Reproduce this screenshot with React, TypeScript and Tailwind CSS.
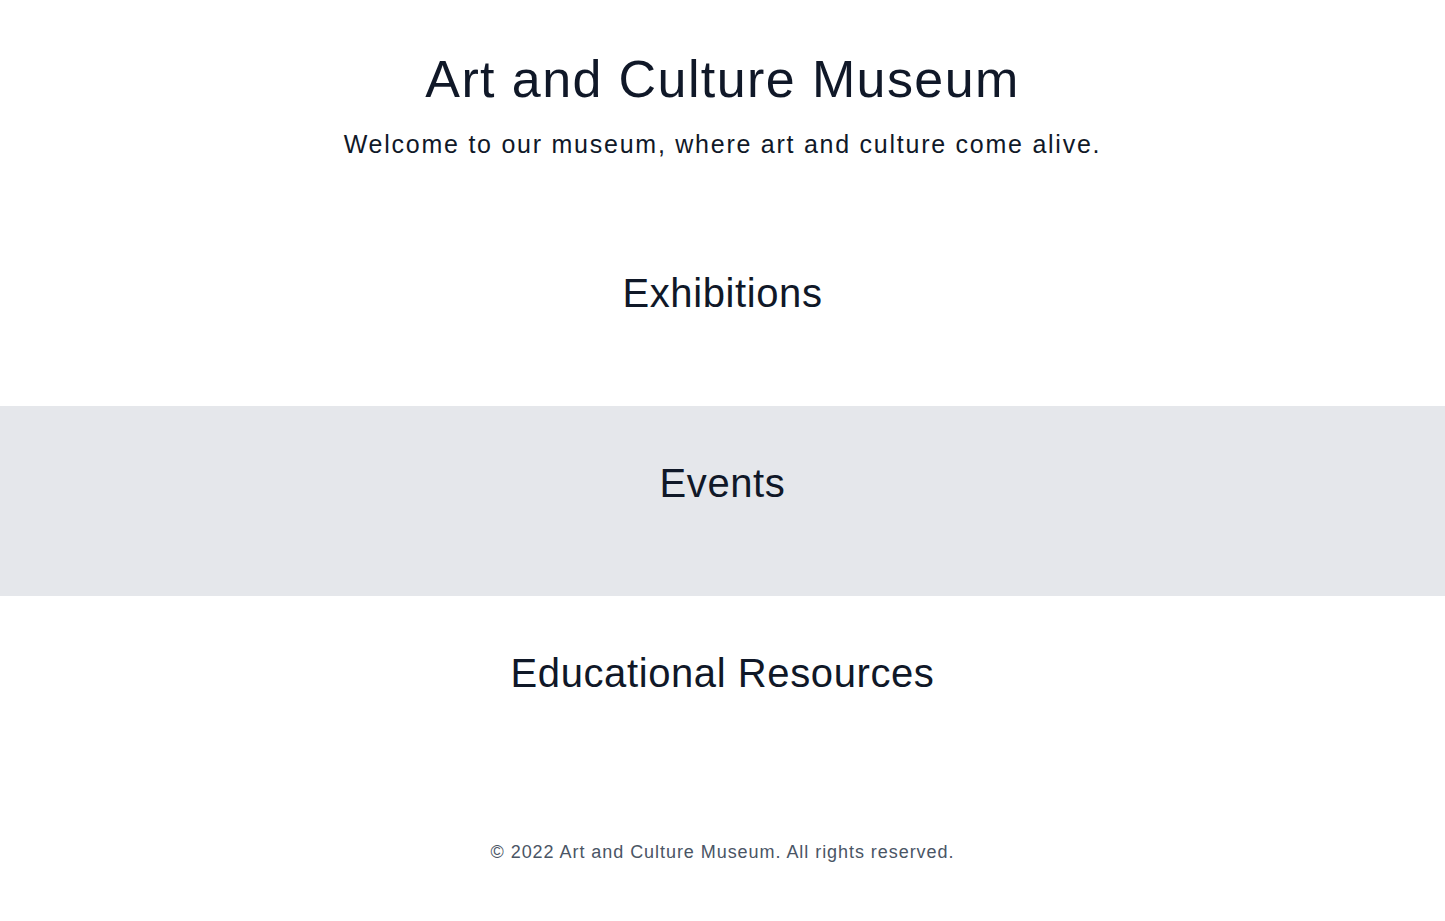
const sections = [
  { title: "Exhibitions", bg: "bg-white" },
  { title: "Events", bg: "bg-gray-200" },
  { title: "Educational Resources", bg: "bg-white" },
];

export default function App() {
  return (
    <div className="min-h-screen bg-white text-gray-900 font-['Liberation_Sans',Arial,sans-serif]">
      <header className="pt-[53px] pb-14 text-center">
        <h1 className="text-[52px] leading-[52px] tracking-[1.4px] mb-[23px]">Art and Culture Museum</h1>
        <p className="text-[25px] leading-8 tracking-[1.75px]">
          Welcome to our museum, where art and culture come alive.
        </p>
      </header>
      <main>
        {sections.map((s) => (
          <section key={s.title} className={`${s.bg} pt-[57px] pb-[93px]`}>
            <h2 className="text-[40px] leading-10 tracking-[0.6px] text-center">{s.title}</h2>
          </section>
        ))}
      </main>
      <footer className="pt-[52px] pb-14 text-center text-gray-600">
        <p className="text-lg leading-7 tracking-[0.95px]">© 2022 Art and Culture Museum. All rights reserved.</p>
      </footer>
    </div>
  );
}
